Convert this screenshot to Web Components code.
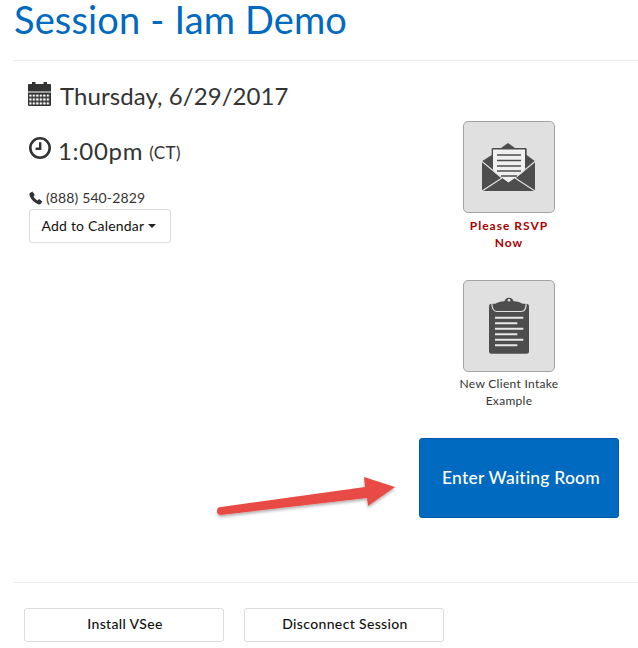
<!DOCTYPE html>
<html><head><meta charset="utf-8"><style>
html,body{margin:0;background:#fff}
body{font-family:Lato,"Open Sans",sans-serif;color:#333;width:638px;height:648px;overflow:hidden}
</style></head><body>
<session-page></session-page>
<template id="tile">
<style>
:host{display:flex;flex-direction:column;align-items:center;width:110px}
.box{width:90px;height:90px;box-sizing:content-box;background:#e0e0e0;border:1px solid #a3a3a3;border-radius:5px;display:flex;align-items:center;justify-content:center}
.lbl{margin-top:3.5px;font-size:12px;line-height:17px;text-align:center;color:var(--c,#333);font-weight:var(--w,400);letter-spacing:var(--ls,.3px);white-space:nowrap}
svg{display:block}
</style>
<div class="box"><slot name="icon"></slot></div>
<div class="lbl"><slot></slot></div>
</template>
<script>
class Base extends HTMLElement{
  constructor(html){super();this.attachShadow({mode:'open'}).innerHTML=html}
}
class IconTile extends HTMLElement{
  constructor(){super();this.attachShadow({mode:'open'}).append(document.getElementById('tile').content.cloneNode(true))}
}
customElements.define('icon-tile',IconTile);
class PlainButton extends Base{
  constructor(){super(`<style>
  :host{display:flex;align-items:center;justify-content:center;box-sizing:border-box;width:200px;height:34px;padding:0 0 3px 2px;background:#fff;border:1px solid #ddd;border-radius:3px;font-size:14px;font-weight:500;color:#111;letter-spacing:.35px}
  </style><slot></slot>`)}
}
customElements.define('plain-button',PlainButton);
class CalendarButton extends Base{
  constructor(){super(`<style>
  :host{display:flex;align-items:center;gap:4px;box-sizing:border-box;height:34px;padding:0 0 2px 11.500px;width:142px;background:#fff;border:1px solid #ddd;border-radius:3px;font-size:14px;color:#111;letter-spacing:.2px;white-space:nowrap}
  i{display:block;width:0;height:0;border-left:4px solid transparent;border-right:4px solid transparent;border-top:4px solid #222;margin-top:1px}
  </style><slot></slot><i></i>`)}
}
customElements.define('calendar-button',CalendarButton);
class SessionPage extends Base{
  constructor(){super(`<style>
  :host{display:block;position:relative;width:638px;height:648px;box-sizing:border-box;padding:0 0 0 14px}
  h1{margin:0;font-size:38px;line-height:38px;font-weight:400;color:#0069c0;letter-spacing:.15px;white-space:nowrap}
  hr{border:0;border-top:1px solid #eaeaea;margin:0;height:0}
  .h1rule{margin-top:22px}
  .main{display:flex;height:521px;box-sizing:border-box}
  .left{width:405px;padding:20px 0 0 15px;box-sizing:border-box}
  .row{display:flex;align-items:center;font-size:24px;line-height:30px;color:#333;white-space:nowrap}
  .row svg{display:block;flex:none}
  .date svg{margin:0 9px 0 -1px;position:relative;top:-2px}
  .date{letter-spacing:.08px}
  .time{margin-top:25px;letter-spacing:.7px}
  .time svg{margin-right:7px;position:relative;top:-3px}
  .time small{font-size:17px;margin-left:6px;position:relative;top:2px;letter-spacing:.4px}
  .phone{margin-top:22px;font-size:14px;line-height:20px;display:flex;align-items:center;gap:3px;color:#333;letter-spacing:.12px}
  .cal{margin-top:1px}
  .right{width:200px;display:flex;flex-direction:column;align-items:center;padding-top:60px;box-sizing:border-box}
  icon-tile{position:relative;left:-10px}
  .rsvp{--c:#a80000;--w:700;--ls:1px}
  .t2{margin-top:29px}
  .enter{margin-top:29px;width:200px;height:80px;flex:none;box-sizing:border-box;padding:0 0 2px 4px;background:#0069c0;border:1px solid #0059a8;border-radius:3px;color:#fff;font-size:17.5px;font-weight:500;display:flex;align-items:center;justify-content:center;letter-spacing:.2px;white-space:nowrap}
  .footer{display:flex;gap:20px;padding:25px 0 0 10px}
  .arrow{position:absolute;left:210px;top:470px;overflow:visible}
  </style>
  <h1>Session - Iam Demo</h1>
  <hr class="h1rule">
  <div class="main">
    <div class="left">
      <div class="row date">
        <svg width="23" height="24" viewBox="0 0 23 24"><defs><pattern id="g" x="1.200" y="12.400" width="3.500" height="4" patternUnits="userSpaceOnUse"><rect width="2.300" height="2.300" fill="#fff"/></pattern></defs><path fill="#333" d="M4 0h3.500v2h8V0H19v2h3a1 1 0 0 1 1 1v6.500H0V3a1 1 0 0 1 1-1h3zM0 10.500h23V23a1 1 0 0 1-1 1H1a1 1 0 0 1-1-1z"/><rect x="1.200" y="12.400" width="20.800" height="10.400" fill="url(#g)"/></svg>
        <span>Thursday, 6/29/2017</span>
      </div>
      <div class="row time">
        <svg width="22" height="22" viewBox="0 0 22 22"><circle cx="11" cy="11" r="9.700" fill="none" stroke="#333" stroke-width="2.600"/><path d="M11.200 5.200v6.600H6.600" fill="none" stroke="#333" stroke-width="2.400"/></svg>
        <span>1:00pm</span><small>(CT)</small>
      </div>
      <div class="phone">
        <svg width="14" height="14" viewBox="0 0 14 14"><path fill="#333" d="M3.400.6 1 2C.3 2.500.2 3.500.6 4.600c1.500 4.200 4.500 7.200 8.600 8.700 1.100.4 2.100.2 2.700-.6l1.400-2.300-3.200-2.300-1.600 1.300C7 8.700 5.300 7 4.500 5.500l1.300-1.600z"/></svg>
        <span>(888) 540-2829</span>
      </div>
      <calendar-button class="cal">Add to Calendar</calendar-button>
    </div>
    <div class="right">
      <icon-tile class="rsvp">
        <svg slot="icon" width="54" height="50" viewBox="0 0 54 50"><path fill="#4d4d4d" d="M26 1l7 5h10.500a1.200 1.200 0 0 1 1.200 1.200V13L53 19.300V49H0V19.300L9.700 13V7.200A1.200 1.200 0 0 1 11 6h8z"/><path fill="#f0f0f0" d="M11 7.500h32V28L40 31 26.500 40.500 13 31 11 28z"/><path d="M0 19.500 20 36M53 19.500 33 36M0 49 20 36M53 49 33 36" stroke="#e0e0e0" stroke-width="1.200" fill="none"/><path d="M15 13h24M15 18.500h24M15 24h24M15 29h24M19 34h16" stroke="#4d4d4d" stroke-width="1.500"/></svg>
        Please RSVP<br>Now
      </icon-tile>
      <icon-tile class="t2">
        <svg slot="icon" width="40" height="58" viewBox="0 0 40 58"><rect y="6.700" width="40" height="50" rx="2.500" fill="#4d4d4d"/><path fill="#4d4d4d" d="M5 8C8 5.500 11 4.500 15.500 4.300a4.600 4.600 0 0 1 9 0C29 4.500 32 5.500 35 8z"/><circle cx="20" cy="3.300" r="1.300" fill="#e0e0e0"/><path d="M2.800 6c0 5.500 2 8.500 5 8.500h24.400c3 0 5-3 5-8.500" fill="none" stroke="#e0e0e0" stroke-width="1.200"/><path d="M6 20.700h28.300M6 26.300h22.300M6 31.700h28.300M6 37.300h22.300M6 42.700h28.300M6 48.300h22.300" stroke="#e8e8e8" stroke-width="1.900"/></svg>
        New Client Intake<br>Example
      </icon-tile>
      <div class="enter">Enter Waiting Room</div>
    </div>
  </div>
  <hr>
  <div class="footer">
    <plain-button>Install VSee</plain-button>
    <plain-button>Disconnect Session</plain-button>
  </div>
  <svg class="arrow" width="190" height="50" viewBox="0 0 190 50">
    <defs><filter id="s" x="-10%" y="-40%" width="120%" height="180%"><feDropShadow dx="0" dy="2" stdDeviation="1.500" flood-color="#000" flood-opacity=".3"/></filter></defs>
    <path filter="url(#s)" fill="#e84c44" d="M11 37 155 17 154 7 185 17 158 36 157 28 11 45a4 4 0 0 1 0-8z"/>
  </svg>`)}
}
customElements.define('session-page',SessionPage);
</script>
</body></html>
